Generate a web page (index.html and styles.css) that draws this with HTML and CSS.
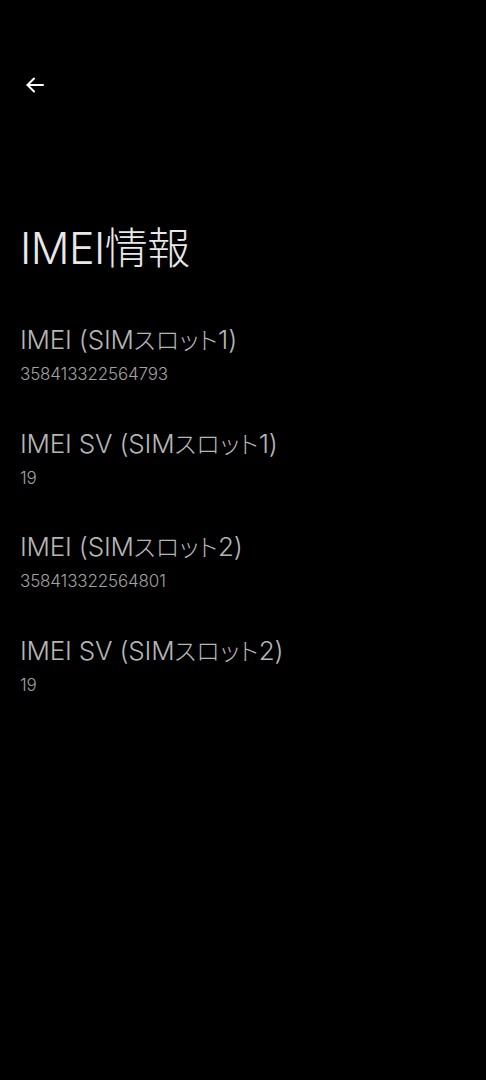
FILE: index.html
```html
<!DOCTYPE html>
<html lang="ja">
<head>
  <meta charset="UTF-8">
  <meta name="viewport" content="width=device-width, initial-scale=1.0">
  <title>IMEI情報</title>
  <link rel="stylesheet" href="styles.css">
</head>
<body>
  <div class="screen">
    <div class="toolbar">
      <button class="back-btn" aria-label="戻る">
        <svg width="24" height="24" viewBox="0 0 24 24" fill="none" stroke="#ffffff" stroke-width="2" stroke-linecap="round" stroke-linejoin="round">
          <path d="M20 12H4.5"/>
          <path d="M11 5.5L4.5 12L11 18.5"/>
        </svg>
      </button>
    </div>

    <h1 class="page-title">IMEI情報</h1>

    <ul class="info-list">
      <li class="info-item">
        <div class="info-label">IMEI (SIM<span class="kana">スロット</span>1)</div>
        <div class="info-value">358413322564793</div>
      </li>
      <li class="info-item">
        <div class="info-label">IMEI SV (SIM<span class="kana">スロット</span>1)</div>
        <div class="info-value">19</div>
      </li>
      <li class="info-item">
        <div class="info-label">IMEI (SIM<span class="kana">スロット</span>2)</div>
        <div class="info-value">358413322564801</div>
      </li>
      <li class="info-item">
        <div class="info-label">IMEI SV (SIM<span class="kana">スロット</span>2)</div>
        <div class="info-value">19</div>
      </li>
    </ul>
  </div>
</body>
</html>
```

FILE: styles.css
```css
:root {
  --bg-color: #000000;
  --title-color: #e8e8e8;
  --label-color: #b6b6b6;
  --value-color: #a2a2a2;
}

body {
  margin: 0;
  background-color: var(--bg-color);
  font-family: 'Inter', 'Noto Sans CJK JP', sans-serif;
  min-height: 100vh;
}

.screen {
  display: flex;
  flex-direction: column;
  padding: 0 20px;
}

.toolbar {
  height: 120px;
  display: flex;
  align-items: flex-start;
  padding-top: 73px;
  box-sizing: border-box;
}

.back-btn {
  width: 24px;
  height: 24px;
  padding: 0;
  margin-left: 3px;
  border: none;
  background: none;
  display: flex;
}

.page-title {
  margin: 100px 0 0;
  font-size: 43px;
  font-weight: 300;
  line-height: 56px;
  color: var(--title-color);
  letter-spacing: -0.5px;
}

.info-list {
  list-style: none;
  margin: 49px 0 0;
  padding: 0;
  display: flex;
  flex-direction: column;
  gap: 43.5px;
}

.info-label {
  font-size: 26px;
  font-weight: 300;
  line-height: 30px;
  color: var(--label-color);
  letter-spacing: -0.2px;
  white-space: nowrap;
}

.info-label .kana {
  font-size: 24px;
  font-feature-settings: "palt";
  letter-spacing: 0.5px;
}

.info-value {
  margin-top: 7px;
  font-size: 17px;
  font-weight: 300;
  line-height: 22px;
  color: var(--value-color);
  letter-spacing: -0.15px;
}
```
